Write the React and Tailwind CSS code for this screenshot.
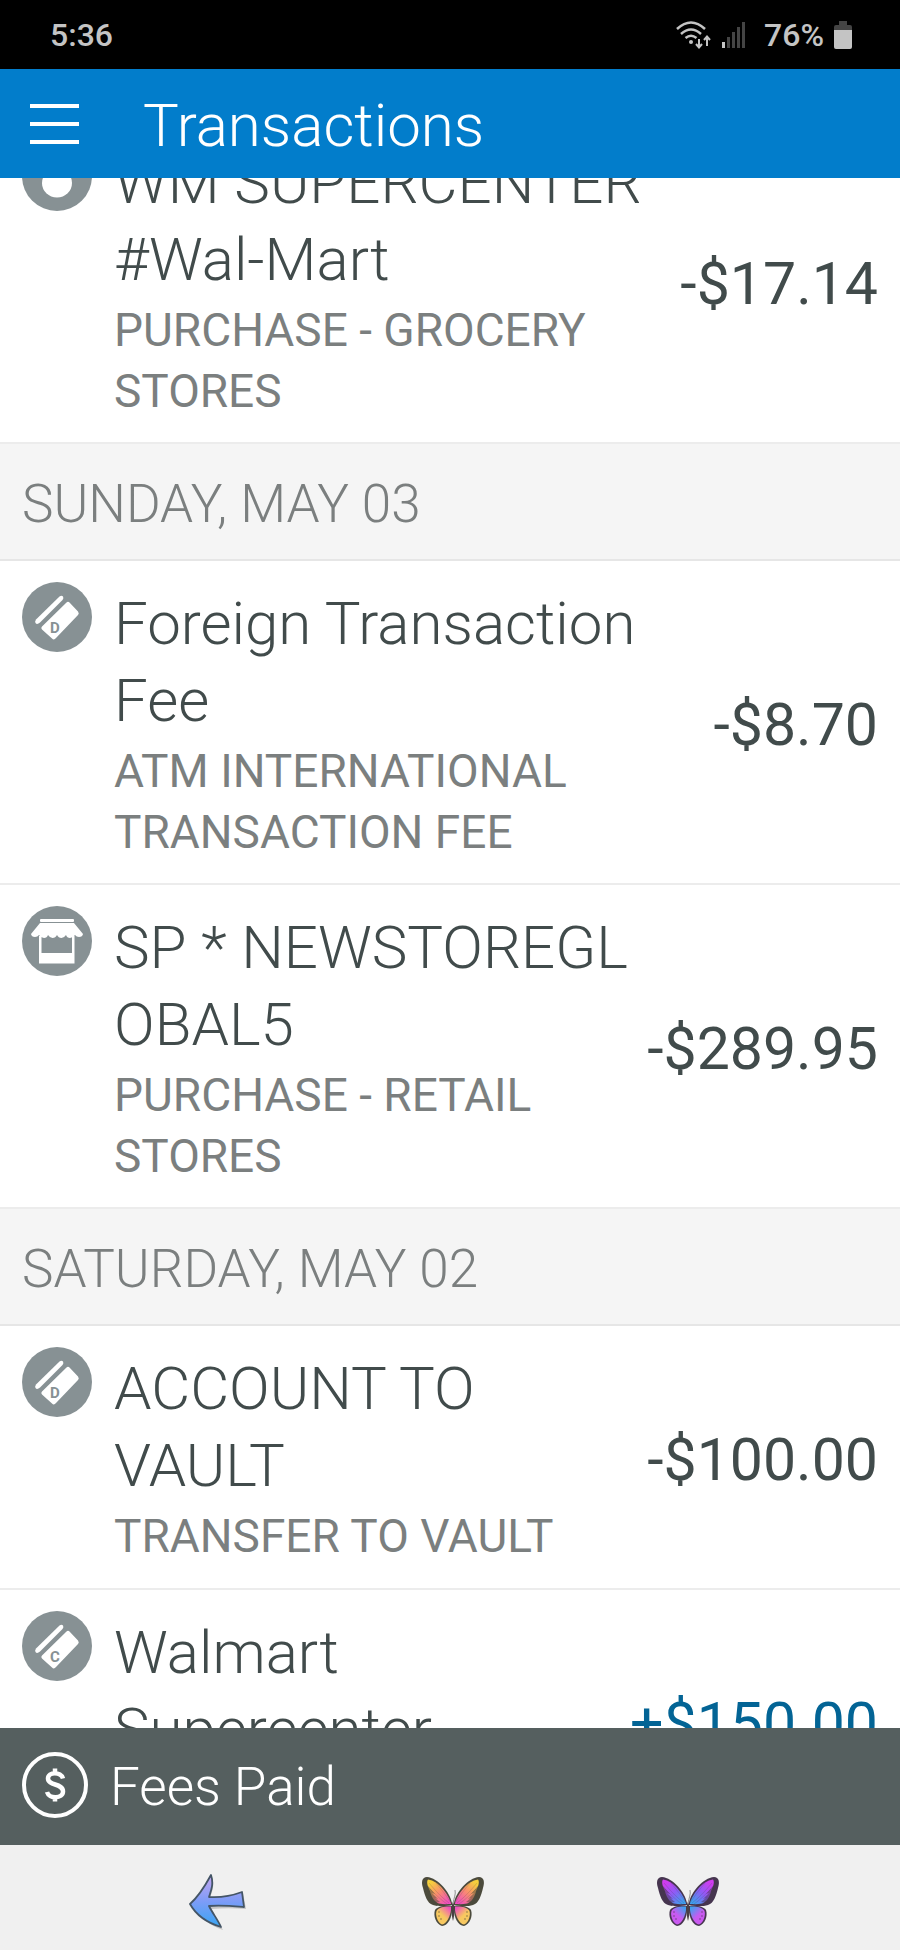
import React, { useId } from 'react';

const GROUPS = [
  {
    date: null,
    items: [
      { id: 1, icon: 'grocery', title: 'WM SUPERCENTER #Wal-Mart', type: 'PURCHASE - GROCERY STORES', amount: '-$17.14' },
    ],
  },
  {
    date: 'SUNDAY, MAY 03',
    items: [
      { id: 2, icon: 'debit', title: 'Foreign Transaction Fee', type: 'ATM INTERNATIONAL TRANSACTION FEE', amount: '-$8.70' },
      { id: 3, icon: 'store', title: 'SP * NEWSTOREGLOBAL5', type: 'PURCHASE - RETAIL STORES', amount: '-$289.95', breakAll: true },
    ],
  },
  {
    date: 'SATURDAY, MAY 02',
    items: [
      { id: 4, icon: 'debit', title: 'ACCOUNT TO VAULT', type: 'TRANSFER TO VAULT', amount: '-$100.00' },
      { id: 5, icon: 'credit', title: 'Walmart Supercenter', amount: '+$150.00', positive: true },
    ],
  },
];

function CardGlyph({ letter }) {
  return (
    <>
      <path d="M14 37.500L37.500 14.500Q39.500 13 41 14.500Q42 16 40.500 18L18 40.500Q15 43 13.500 41Q12.500 39.500 14 37.500Z" fill="#fff" />
      <path d="M44.500 20.500Q46 19 47.500 20.500L56 29.500Q57.500 31.500 56 33L34 56Q32 58.500 30 56.500L20 47.500Q18.500 46 20 44.500Z" fill="#fff" />
      <text x="28" y="51" fontSize="15" fontWeight="700" fill="#879194">{letter}</text>
    </>
  );
}

function CategoryIcon({ kind }) {
  return (
    <svg viewBox="0 0 70 70" className="w-[70px] h-[70px]" aria-hidden="true">
      <circle cx="35" cy="35" r="35" fill="#879194" />
      {kind === 'debit' && <CardGlyph letter="D" />}
      {kind === 'credit' && <CardGlyph letter="C" />}
      {kind === 'grocery' && <ellipse cx="35" cy="42" rx="15" ry="14.500" fill="#fff" />}
      {kind === 'store' && (
        <g fill="#fff">
          <rect x="18" y="13" width="34" height="3" rx="1" />
          <path d="M18 17H52L61 28Q60.500 31 57 31Q54.500 31 53 29Q51 32 48 32Q45 32 44 29Q42 32 39.500 32Q36.500 32 35 29Q33.500 32 30.500 32Q28 32 26 29Q25 32 22 32Q19 32 17 29Q15.500 31 13 31Q9.500 31 9 28Z" />
          <path d="M17 30H19.500V47H50V30H52.500V57.500H17Z" />
        </g>
      )}
    </svg>
  );
}

function Butterfly({ inner, mid, outer, lower, edge }) {
  const id = useId();
  const wing = (
    <>
      <path d="M31 27C29 16 17 2 6 1C1 1 0 6 2 12C4 20 6 27 12 29C18 31 27 30 31 29Z" fill={edge} />
      <path d="M30 27C27 18 18 5 7 3.500C5 6 7 11 9 15C10 20 13 26 18 27.500C23 28.500 27 28 30 28Z" fill={`url(#${id}-top)`} />
      <path d="M8 7C14 14 19 20 28 27M9 13C14 18 20 24 26 28M15 7C20 13 25 19 30 27" stroke={edge} strokeWidth="0.5" opacity="0.4" fill="none" />
      <path d="M7 10L14 18L11 17L17 23L14 22L19 26L13 27C9 24 6 17 7 10Z" fill={edge} opacity="0.5" />
      <path d="M31 30C25 29 16 30 14 34C12 40 15 48 21 50C27 50 31 41 31 34Z" fill={edge} />
      <path d="M30 30.500C25 30 17 31 15.500 35C14 40 17 47 21 48.500C26 48 29.500 39 30 34Z" fill={`url(#${id}-low)`} />
      <g fill={edge} opacity="0.8">
        <circle cx="18" cy="36" r="0.7" />
        <circle cx="18" cy="40" r="0.7" />
        <circle cx="20" cy="43" r="0.7" />
      </g>
    </>
  );
  return (
    <svg viewBox="0 0 64 52" className="w-16 h-[52px]" aria-hidden="true">
      <defs>
        <linearGradient id={`${id}-top`} x1="1" y1="1" x2="0.1" y2="0">
          <stop offset="0.1" stopColor={inner} />
          <stop offset="0.5" stopColor={mid} />
          <stop offset="0.9" stopColor={outer} />
        </linearGradient>
        <linearGradient id={`${id}-low`} x1="1" y1="0" x2="0.3" y2="0.9">
          <stop offset="0.1" stopColor={inner} />
          <stop offset="0.65" stopColor={lower} />
        </linearGradient>
      </defs>
      {wing}
      <g transform="translate(64 0) scale(-1 1)">{wing}</g>
      <path d="M32 26C34 29 34 38 32 45C30 38 30 29 32 26Z" fill="#4a4044" />
      <path d="M32 27C33 22 35 18 34 14" stroke="#777" strokeWidth="0.8" fill="none" />
    </svg>
  );
}

function BackArrow() {
  return (
    <svg viewBox="0 0 58 56" className="w-[58px] h-14" aria-hidden="true">
      <defs>
        <linearGradient id="arrow" x1="0" y1="0" x2="0" y2="1">
          <stop offset="0" stopColor="#c4a6f0" />
          <stop offset="0.5" stopColor="#7e9cf7" />
          <stop offset="1" stopColor="#38a5f2" />
        </linearGradient>
      </defs>
      <path d="M23 3C26 11 23 18 21 24C34 25 43 23 54 19L57 35C45 34 34 34 22 35C25 43 30 48 34 56C20 51 9 43 3 32C10 25 17 14 23 3Z" fill="#999" opacity="0.5" />
      <path d="M22 1C25 10 22 17 20 23C33 24 42 22 53 18L55 33C43 32 32 31 20 32C24 40 29 46 32 53C19 49 7 41 1 30C9 23 16 12 22 1Z" fill="url(#arrow)" stroke="#445566" strokeWidth="1.8" strokeLinejoin="round" />
    </svg>
  );
}

function StatusBar() {
  return (
    <div className="flex h-[69px] shrink-0 items-center justify-between bg-black pl-[50px] pr-12 text-[32px] font-medium text-[#c4c4c4]">
      <span>5:36</span>
      <div className="flex items-center gap-2.5">
        <svg viewBox="0 0 36 28" className="w-9 h-7" fill="none" stroke="#c4c4c4" strokeWidth="2.500" aria-hidden="true">
          <path d="M1 8Q15 -5 29 8M5 13Q15 4 25 13M9.500 17Q15 12.500 20.500 17" />
          <circle cx="15" cy="21" r="2" fill="#c4c4c4" stroke="none" />
          <path d="M23 18V26M20 23L23 26.500L26 23M31 25V16M28 19L31 15.500L34 19" strokeWidth="2" />
        </svg>
        <svg viewBox="0 0 24 26" className="w-6 h-[26px]" aria-hidden="true">
          <rect x="0" y="20" width="3" height="6" fill="#c4c4c4" />
          <g fill="#444">
            <rect x="5" y="15" width="3" height="11" />
            <rect x="10" y="10" width="3" height="16" />
            <rect x="15" y="5" width="3" height="21" />
            <rect x="20" y="0" width="3" height="26" />
          </g>
        </svg>
        <span className="ml-2">76%</span>
        <svg viewBox="0 0 18 28" className="w-[18px] h-7" aria-hidden="true">
          <path d="M5 0H13V4H16Q18 4 18 6V9H0V6Q0 4 2 4H5Z" fill="#444" />
          <path d="M0 9H18V26Q18 28 16 28H2Q0 28 0 26Z" fill="#c4c4c4" />
        </svg>
      </div>
    </div>
  );
}

function TransactionRow({ item }) {
  return (
    <li className="grid min-h-[264px] grid-cols-[92px_1fr_234px] border-b-2 border-[#ececec] bg-white px-[22px] pt-6 pb-5">
      <div className="-mt-[3px]">
        <CategoryIcon kind={item.icon} />
      </div>
      <div>
        <p className={`text-[60px] leading-[77px] font-light text-[#414b4b] ${item.breakAll ? 'break-all' : ''}`}>
          {item.title}
        </p>
        {item.type && <p className="mt-0.5 text-[46px] leading-[61px] text-[#7b7f7f]">{item.type}</p>}
      </div>
      <p className={`self-center justify-self-end whitespace-nowrap text-[59px] leading-[77px] ${item.positive ? 'text-[#036495]' : 'text-[#414b4b]'}`}>
        {item.amount}
      </p>
    </li>
  );
}

export default function App() {
  return (
    <div className="flex h-screen flex-col overflow-hidden bg-white font-['Roboto',sans-serif]">
      <StatusBar />

      <header className="flex h-[109px] shrink-0 items-center bg-[#027dcb] pl-[30px] text-white">
        <button aria-label="Menu" className="flex w-[49px] flex-col gap-3.5 cursor-pointer">
          <span className="h-1 bg-white" />
          <span className="h-1 bg-white" />
          <span className="h-1 bg-white" />
        </button>
        <h1 className="ml-16 pt-1 text-[60px] leading-[77px] font-light">Transactions</h1>
      </header>

      {/* list is scrolled part way through the first row */}
      <main className="min-h-0 flex-1 overflow-hidden">
        <div className="-mt-[58px]">
          {GROUPS.map(group => (
            <section key={group.items[0].id}>
              {group.date && (
                <h2 className="border-b-2 border-[#e6e6e6] bg-[#f5f5f5] px-[22px] pt-[22px] pb-4 text-[53px] leading-[77px] font-light text-[#7b7f7f]">
                  {group.date}
                </h2>
              )}
              <ul>
                {group.items.map(item => <TransactionRow key={item.id} item={item} />)}
              </ul>
            </section>
          ))}
        </div>
      </main>

      <button className="flex h-[117px] shrink-0 items-center gap-[22px] bg-[#555f5f] px-[22px] pb-1 text-white cursor-pointer">
        <svg viewBox="0 0 66 66" className="w-[66px] h-[66px]" fill="none" stroke="#fff" aria-hidden="true">
          <circle cx="33" cy="33" r="31" strokeWidth="4" />
          <path d="M41 26.500C39 19.500 26 19.500 26 26.500C26 34 41 31 41 39.500C41 47 27 47 25 40M33 16.500V22M33 44V49.500" strokeWidth="4.500" />
        </svg>
        <span className="pt-1.5 text-[53px] leading-[77px] font-light">Fees Paid</span>
      </button>

      <nav className="grid h-[105px] shrink-0 grid-cols-3 items-center bg-[#f0f0f0] pl-[100px] pr-[95px] pt-2">
        <button aria-label="Back" className="flex justify-center cursor-pointer"><BackArrow /></button>
        <button aria-label="Home" className="flex justify-center cursor-pointer">
          <Butterfly inner="#f04fc0" mid="#f98a72" outer="#f5cf3c" lower="#f7c860" edge="#4b4a3c" />
        </button>
        <button aria-label="Recent apps" className="flex justify-center cursor-pointer">
          <Butterfly inner="#3fa0ee" mid="#8e5cf5" outer="#d03cf0" lower="#c95af0" edge="#46354f" />
        </button>
      </nav>
    </div>
  );
}
